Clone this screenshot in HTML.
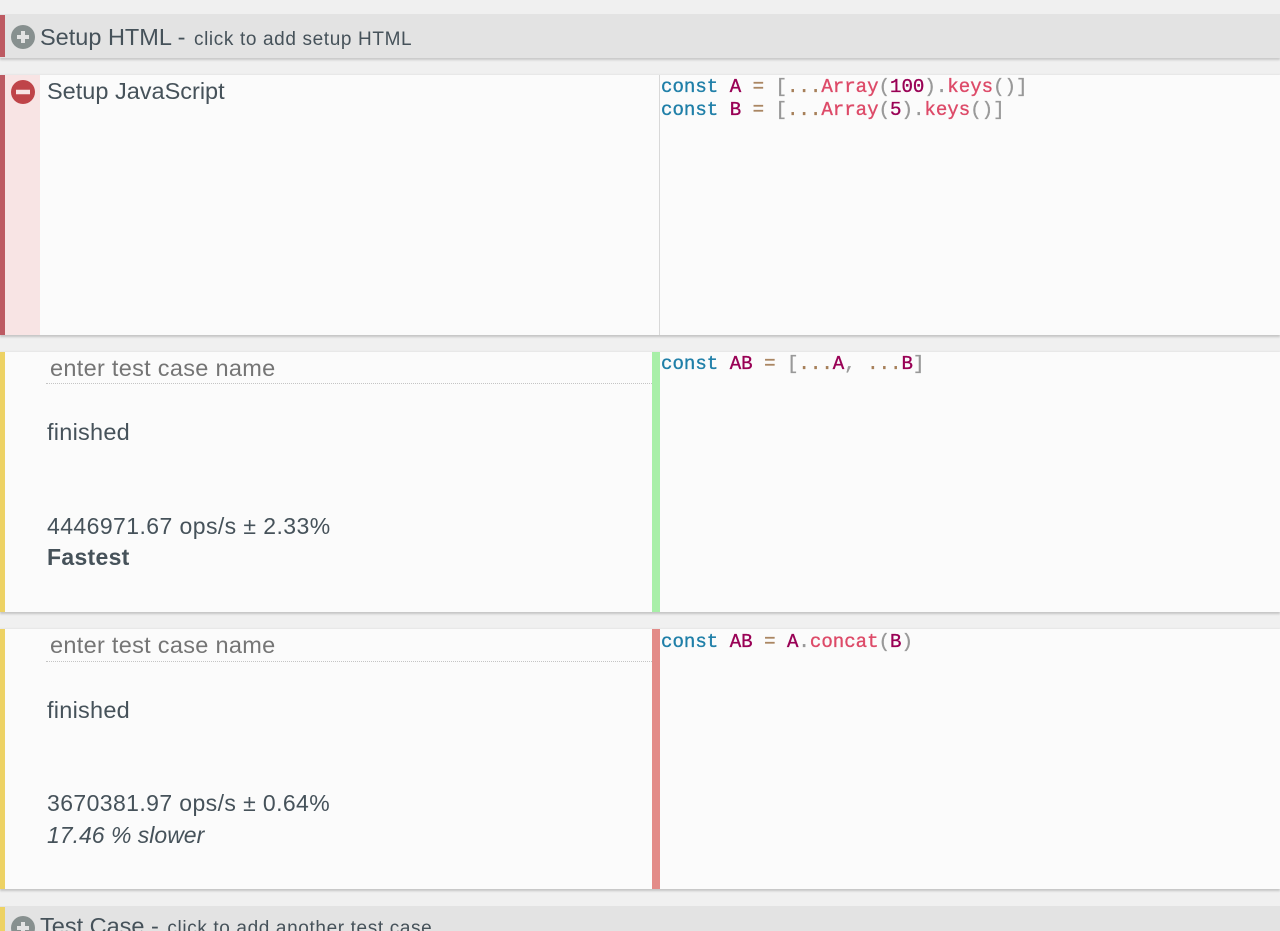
<!DOCTYPE html>
<html><head><meta charset="utf-8">
<style>
html,body{margin:0;padding:0;background:#f0f0f0;width:1280px;height:931px;overflow:hidden}
body{position:relative;font-family:"Liberation Sans",sans-serif;color:#46525a}
.a{position:absolute}
.t{position:absolute;white-space:nowrap;line-height:30px;font-size:23px}
.s{font-size:19px;letter-spacing:.63px;margin-left:2px}
.panel{position:absolute;left:0;width:1280px;background:#fbfbfb;box-shadow:0 2px 2px #c4c4c4,0 -1px 1px #e6e6e6}
.bar{position:absolute;left:0;width:1280px;background:#e3e3e3;box-shadow:0 2px 2px #c8c8c8}
.m{position:absolute;left:661px;white-space:pre;font-family:"Liberation Mono",monospace;font-size:19.08px;line-height:23px;color:#999;-webkit-text-stroke:.35px currentColor}
.k{color:#1f7fa8}.v{color:#990055}.o{color:#a67f59}.f{color:#dd4a68}.g{color:#999}
.dot{position:absolute;left:46px;width:606px;border-top:1px dotted #c4c4c4}
</style></head><body>

<div class="bar" style="top:14px;height:44px"></div>
<div class="a" style="left:0;top:15px;width:5px;height:42px;background:#bd5a62"></div>
<svg class="a" style="left:11px;top:25px" width="24" height="24" viewBox="0 0 24 24"><circle cx="12" cy="12" r="12" fill="#87908f"/><path d="M6 12h12M12 6v12" stroke="#e3e3e3" stroke-width="4"/></svg>
<div class="t" style="left:40px;top:22px;font-size:23.5px">Setup HTML - <span class="s">click to add setup HTML</span></div>

<div class="panel" style="top:75px;height:260px"></div>
<div class="a" style="left:0;top:75px;width:5px;height:260px;background:#bd5a62"></div>
<div class="a" style="left:5px;top:75px;width:35px;height:260px;background:#f8e4e4"></div>
<svg class="a" style="left:11px;top:80px" width="24" height="24" viewBox="0 0 24 24"><circle cx="12" cy="12" r="12" fill="#bf4449"/><path d="M5 12h14" stroke="#f8e4e4" stroke-width="4.5"/></svg>
<div class="t" style="left:47px;top:76px;font-size:23.5px">Setup JavaScript</div>
<div class="a" style="left:659px;top:75px;width:1px;height:260px;background:#d8d8d8"></div>
<div class="m" style="top:76px"><span class="k">const</span> <span class="v">A</span> <span class="o">=</span> <span class="g">[</span><span class="o">...</span><span class="f">Array</span><span class="g">(</span><span class="v">100</span><span class="g">)</span><span class="g">.</span><span class="f">keys</span><span class="g">()]</span>
<span class="k">const</span> <span class="v">B</span> <span class="o">=</span> <span class="g">[</span><span class="o">...</span><span class="f">Array</span><span class="g">(</span><span class="v">5</span><span class="g">)</span><span class="g">.</span><span class="f">keys</span><span class="g">()]</span></div>

<div class="panel" style="top:352px;height:260px"></div>
<div class="a" style="left:0;top:352px;width:5px;height:260px;background:#edd264"></div>
<div class="t" style="left:50px;top:353px;color:#757575;font-size:23.5px;letter-spacing:.3px">enter test case name</div>
<div class="dot" style="top:383px"></div>
<div class="t" style="left:47px;top:417px;font-size:23.5px;letter-spacing:.25px">finished</div>
<div class="t" style="left:47px;top:511px;font-size:23px;letter-spacing:.42px">4446971.67 ops/s ± 2.33%</div>
<div class="t" style="left:47px;top:542px;font-weight:bold;font-size:23px;letter-spacing:.3px">Fastest</div>
<div class="a" style="left:652px;top:352px;width:8px;height:260px;background:#a8efa8"></div>
<div class="m" style="top:353px"><span class="k">const</span> <span class="v">AB</span> <span class="o">=</span> <span class="g">[</span><span class="o">...</span><span class="v">A</span><span class="g">,</span> <span class="o">...</span><span class="v">B</span><span class="g">]</span></div>

<div class="panel" style="top:629px;height:260px"></div>
<div class="a" style="left:0;top:629px;width:5px;height:260px;background:#edd264"></div>
<div class="t" style="left:50px;top:630px;color:#757575;font-size:23.5px;letter-spacing:.3px">enter test case name</div>
<div class="dot" style="top:661px"></div>
<div class="t" style="left:47px;top:695px;font-size:23.5px;letter-spacing:.25px">finished</div>
<div class="t" style="left:47px;top:788px;font-size:23px;letter-spacing:.4px">3670381.97 ops/s ± 0.64%</div>
<div class="t" style="left:47px;top:820px;font-style:italic;font-size:23px">17.46 % slower</div>
<div class="a" style="left:652px;top:629px;width:8px;height:260px;background:#e38b88"></div>
<div class="m" style="top:631px"><span class="k">const</span> <span class="v">AB</span> <span class="o">=</span> <span class="v">A</span><span class="g">.</span><span class="f">concat</span><span class="g">(</span><span class="v">B</span><span class="g">)</span></div>

<div class="bar" style="top:906px;height:44px"></div>
<div class="a" style="left:0;top:907px;width:5px;height:42px;background:#edd264"></div>
<svg class="a" style="left:11px;top:916px" width="24" height="24" viewBox="0 0 24 24"><circle cx="12" cy="12" r="12" fill="#87908f"/><path d="M6 12h12M12 6v12" stroke="#e3e3e3" stroke-width="4"/></svg>
<div class="t" style="left:40px;top:911px;font-size:23.5px">Test Case - <span class="s">click to add another test case</span></div>

</body></html>
